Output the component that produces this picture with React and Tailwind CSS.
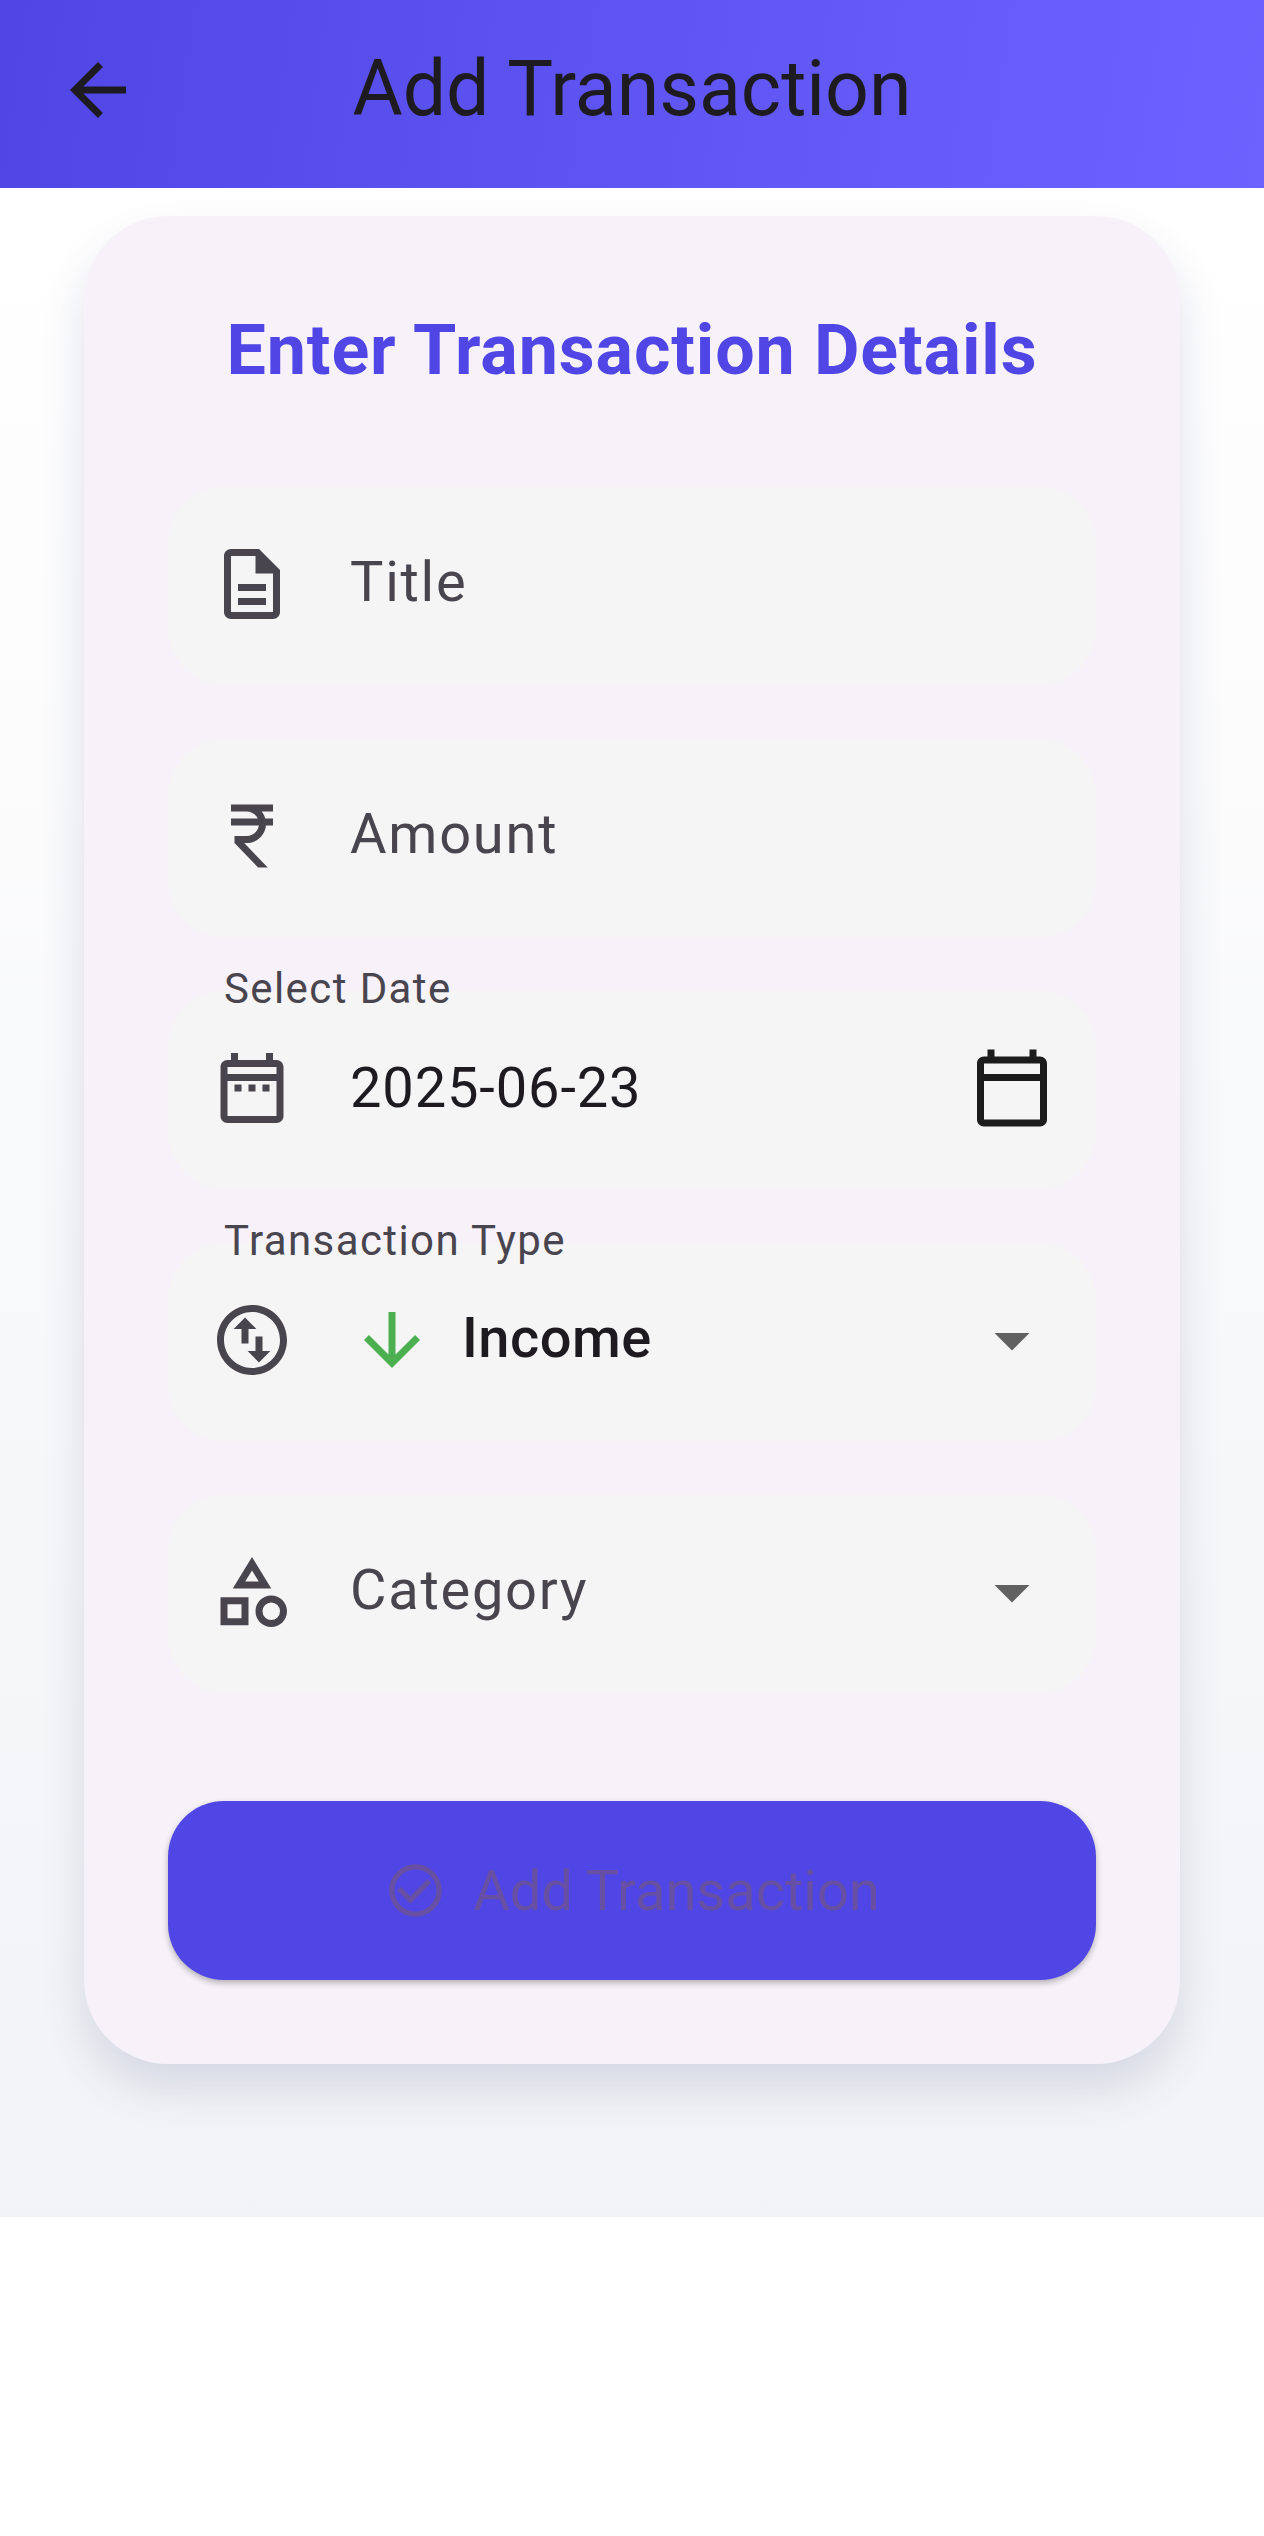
const icons = {
  back: "M20 11H7.83l5.59-5.59L12 4l-8 8 8 8 1.41-1.41L7.83 13H20v-2z",
  description:
    "M8 16h8v2H8zm0-4h8v2H8zm6-10H6c-1.1 0-2 .9-2 2v16c0 1.1.89 2 1.99 2H18c1.1 0 2-.9 2-2V8l-6-6zm4 18H6V4h7v5h5v11z",
  rupee:
    "M13.66 7c-.56-1.18-1.76-2-3.16-2H6V3h12v2h-3.26c.48.58.84 1.26 1.05 2H18v2h-2.02c-.25 2.8-2.61 5-5.48 5h-.73l6.73 7h-2.77L7 14v-2h3.5c1.76 0 3.22-1.3 3.46-3H6V7h7.66z",
  dateRange:
    "M7 11h2v2H7v-2zm14-5v14c0 1.1-.9 2-2 2H5c-1.11 0-2-.9-2-2l.01-14c0-1.1.88-2 1.99-2h1V2h2v2h8V2h2v2h1c1.1 0 2 .9 2 2zM5 8h14V6H5v2zm14 12V10H5v10h14zm-4-7h2v-2h-2v2zm-4 0h2v-2h-2v2z",
  calendar:
    "M20 3h-1V1h-2v2H7V1H5v2H4c-1.1 0-2 .9-2 2v16c0 1.1.9 2 2 2h16c1.1 0 2-.9 2-2V5c0-1.1-.9-2-2-2zm0 18H4V10h16v11zm0-13H4V5h16v3z",
  swap:
    "M12 2C6.48 2 2 6.48 2 12s4.48 10 10 10 10-4.48 10-10S17.52 2 12 2zm0 18c-4.41 0-8-3.59-8-8s3.59-8 8-8 8 3.59 8 8-3.59 8-8 8zM6.75 8.85L10 5.6l3.25 3.25H11V13H9V8.85zM17.25 15.15L14 18.4l-3.25-3.25H13V11h2v4.15z",
  down: "M20 12l-1.41-1.41L13 16.17V4h-2v12.17l-5.58-5.59L4 12l8 8 8-8z",
  category:
    "M12 2l-5.5 9h11L12 2zm0 3.84L13.93 9h-3.87L12 5.84zM17.5 13c-2.49 0-4.5 2.01-4.5 4.5s2.01 4.5 4.5 4.5 4.5-2.01 4.5-4.5-2.01-4.5-4.5-4.5zm0 7a2.5 2.5 0 010-5 2.5 2.5 0 010 5zM3 21.5h8v-8H3v8zm2-6h4v4H5v-4z",
  caret: "M7 10l5 5 5-5z",
  check:
    "M16.59 7.58L10 14.17l-3.59-3.58L5 12l5 5 8-8zM12 2C6.48 2 2 6.48 2 12s4.48 10 10 10 10-4.48 10-10S17.52 2 12 2zm0 18c-4.42 0-8-3.58-8-8s3.58-8 8-8 8 3.58 8 8-3.58 8-8 8z",
};

function Icon({ name, className = "size-[84px]" }) {
  return (
    <svg viewBox="0 0 24 24" fill="currentColor" className={`shrink-0 ${className}`} aria-hidden="true">
      <path d={icons[name]} />
    </svg>
  );
}

function Field({ icon, label, trailing, children }) {
  return (
    <div className="relative flex h-[198px] items-center rounded-[56px] bg-[#f5f5f5] px-[42px] pb-1">
      {label && (
        <span className="absolute top-[-23px] left-14 text-[42px] leading-[42px] tracking-[1.4px] whitespace-nowrap text-[#49454f]">
          {label}
        </span>
      )}
      <Icon name={icon} className="size-[84px] text-[#49454f]" />
      <div className="ml-14 flex flex-1 items-center text-[56px] leading-[66px] tracking-[1.75px]">{children}</div>
      {trailing}
    </div>
  );
}

function Placeholder({ children }) {
  return <span className="pb-1 text-[#49454f]">{children}</span>;
}

export default function App() {
  return (
    <div className="min-h-[2536px] w-[1264px] overflow-hidden bg-white font-[Roboto,sans-serif]">
      <header className="grid h-[188px] grid-cols-[1fr_auto_1fr] items-start bg-[linear-gradient(98.5deg,#4f46e5,#6c63ff)] pt-12 text-[#1d1b20]">
        <button className="ml-14 size-[84px]" aria-label="Back">
          <Icon name="back" />
        </button>
        <h1 className="text-[77px] leading-[82px] whitespace-nowrap">Add Transaction</h1>
      </header>

      <main className="h-[2029px] bg-linear-to-b from-white to-[#f2f3f6] px-[84px] pt-7">
        <section className="rounded-[84px] bg-[#f7f2fa] p-[84px] shadow-[0_24px_44px_rgba(60,75,130,0.16)]">
          <h2 className="text-center text-[70px] leading-[100px] font-bold tracking-[0.87px] whitespace-nowrap text-[#4f46e5]">
            Enter Transaction Details
          </h2>

          <div className="mt-[87px] flex flex-col gap-[54px]">
            <Field icon="description">
              <Placeholder>Title</Placeholder>
            </Field>
            <Field icon="rupee">
              <Placeholder>Amount</Placeholder>
            </Field>
            <Field
              icon="dateRange"
              label="Select Date"
              trailing={<Icon name="calendar" className="size-[84px] text-[#1c1c1c]" />}
            >
              <span className="tracking-[0.87px] text-[#1d1b20]">2025-06-23</span>
            </Field>
            <Field
              icon="swap"
              label="Transaction Type"
              trailing={<Icon name="caret" className="size-[84px] text-[#616161]" />}
            >
              <Icon name="down" className="size-[84px] text-[#4caf50]" />
              <span className="ml-7 pb-1 font-medium tracking-[0.5px] text-[#1d1b20]">Income</span>
            </Field>
            <Field icon="category" trailing={<Icon name="caret" className="size-[84px] text-[#616161]" />}>
              <Placeholder>Category</Placeholder>
            </Field>
          </div>

          <button className="mt-[108px] flex h-[179px] w-full items-center justify-center gap-[26px] rounded-[56px] bg-[#4f46e5] text-[56px] leading-[66px] text-[#6750a4] shadow-[0_3px_6px_rgba(0,0,0,0.28)]">
            <Icon name="check" className="size-[63px]" />
            <span className="whitespace-nowrap">Add Transaction</span>
          </button>
        </section>
      </main>
    </div>
  );
}
